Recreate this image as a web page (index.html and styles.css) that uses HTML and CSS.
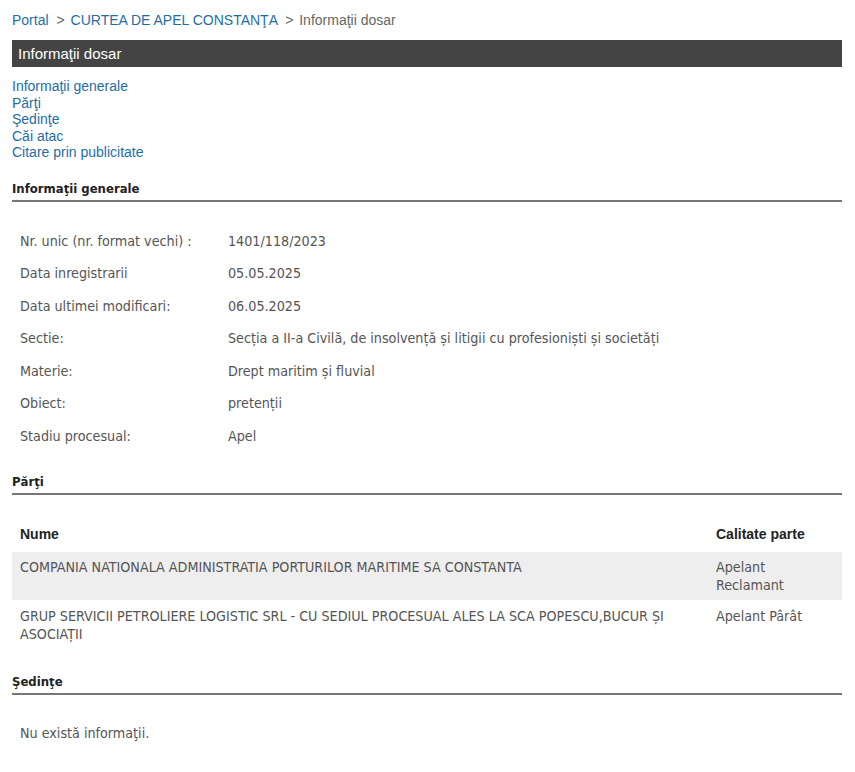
FILE: index.html
```html
<!DOCTYPE html>
<html lang="ro">
<head>
  <meta charset="UTF-8">
  <title>Informaţii dosar</title>
  <link rel="stylesheet" href="styles.css">
</head>
<body>
  <div class="page">
    <div class="breadcrumb">
      <a href="#">Portal</a>
      <span class="sep">&gt;</span>
      <a href="#">CURTEA DE APEL CONSTANŢA</a>
      <span class="sep">&gt;</span>
      <span class="current">Informaţii dosar</span>
    </div>

    <div class="title-bar">Informaţii dosar</div>

    <ul class="toc">
      <li><a href="#generale">Informaţii generale</a></li>
      <li><a href="#parti">Părţi</a></li>
      <li><a href="#sedinte">Şedinţe</a></li>
      <li><a href="#cai">Căi atac</a></li>
      <li><a href="#citare">Citare prin publicitate</a></li>
    </ul>

    <h2 class="section-title" id="generale">Informaţii generale</h2>
    <table class="info">
      <tr><td class="label">Nr. unic (nr. format vechi) :</td><td>1401/118/2023</td></tr>
      <tr><td class="label">Data inregistrarii</td><td>05.05.2025</td></tr>
      <tr><td class="label">Data ultimei modificari:</td><td>06.05.2025</td></tr>
      <tr><td class="label">Sectie:</td><td>Secția a II-a Civilă, de insolvență și litigii cu profesioniști și societăți</td></tr>
      <tr><td class="label">Materie:</td><td>Drept maritim și fluvial</td></tr>
      <tr><td class="label">Obiect:</td><td>pretenții</td></tr>
      <tr><td class="label">Stadiu procesual:</td><td>Apel</td></tr>
    </table>

    <h2 class="section-title" id="parti">Părţi</h2>
    <table class="parties">
      <thead>
        <tr><th>Nume</th><th class="role">Calitate parte</th></tr>
      </thead>
      <tbody>
        <tr class="odd">
          <td>COMPANIA NATIONALA ADMINISTRATIA PORTURILOR MARITIME SA CONSTANTA</td>
          <td class="role">Apelant<br>Reclamant</td>
        </tr>
        <tr>
          <td>GRUP SERVICII PETROLIERE LOGISTIC SRL - CU SEDIUL PROCESUAL ALES LA SCA POPESCU,BUCUR ȘI ASOCIAȚII</td>
          <td class="role">Apelant Pârât</td>
        </tr>
      </tbody>
    </table>

    <h2 class="section-title" id="sedinte">Şedinţe</h2>
    <p class="empty">Nu există informaţii.</p>
  </div>
</body>
</html>
```

FILE: styles.css
```css
* {
  box-sizing: border-box;
}

body {
  margin: 0;
  background: #fff;
  font-family: "Liberation Sans", Arial, sans-serif;
  color: #555;
}

.page {
  width: 830px;
  margin-left: 12px;
  padding-top: 12px;
}

a {
  color: #1f6ea3;
  text-decoration: none;
}

.breadcrumb {
  font-size: 14px;
  line-height: 17px;
  color: #666;
}

.breadcrumb .sep {
  margin: 0 2px 0 4px;
}

.title-bar {
  margin-top: 11px;
  height: 27px;
  padding: 0 6px;
  background: #444;
  color: #fff;
  font-size: 15px;
  line-height: 27px;
}

.toc {
  list-style: none;
  margin: 11px 0 0;
  padding: 0;
  font-size: 14px;
  line-height: 16.5px;
}

.section-title {
  margin: 0;
  padding-bottom: 3px;
  border-bottom: 2px solid #777;
  font-family: "DejaVu Sans Condensed", "DejaVu Sans", sans-serif;
  font-size: 13px;
  font-weight: bold;
  line-height: 16px;
  color: #222;
}

#generale {
  margin-top: 20px;
}

.info {
  border-collapse: collapse;
  margin: 23px 0 22px;
  font-family: "DejaVu Sans Condensed", "DejaVu Sans", sans-serif;
  font-size: 14.2px;
  color: #555;
}

.info td {
  height: 32.5px;
  padding: 0 8px;
}

.info .label {
  width: 208px;
}

.parties {
  width: 100%;
  border-collapse: collapse;
  margin: 25px 0 25px;
  font-family: "DejaVu Sans Condensed", "DejaVu Sans", sans-serif;
  font-size: 14.2px;
  color: #555;
}

.parties th {
  text-align: left;
  padding: 6px 8px 10px;
  font-family: "Liberation Sans", Arial, sans-serif;
  font-size: 14px;
  color: #222;
  line-height: 16px;
}

.parties td {
  padding: 8px 8px 6px;
  line-height: 17.5px;
  vertical-align: top;
}

.parties .role {
  width: 134px;
}

.parties .odd td {
  padding: 6px 8px;
  line-height: 18px;
  background: #eee;
}

.empty {
  margin: 30px 0 0;
  padding-left: 8px;
  font-family: "DejaVu Sans Condensed", "DejaVu Sans", sans-serif;
  font-size: 14.2px;
  line-height: 17px;
}
```
